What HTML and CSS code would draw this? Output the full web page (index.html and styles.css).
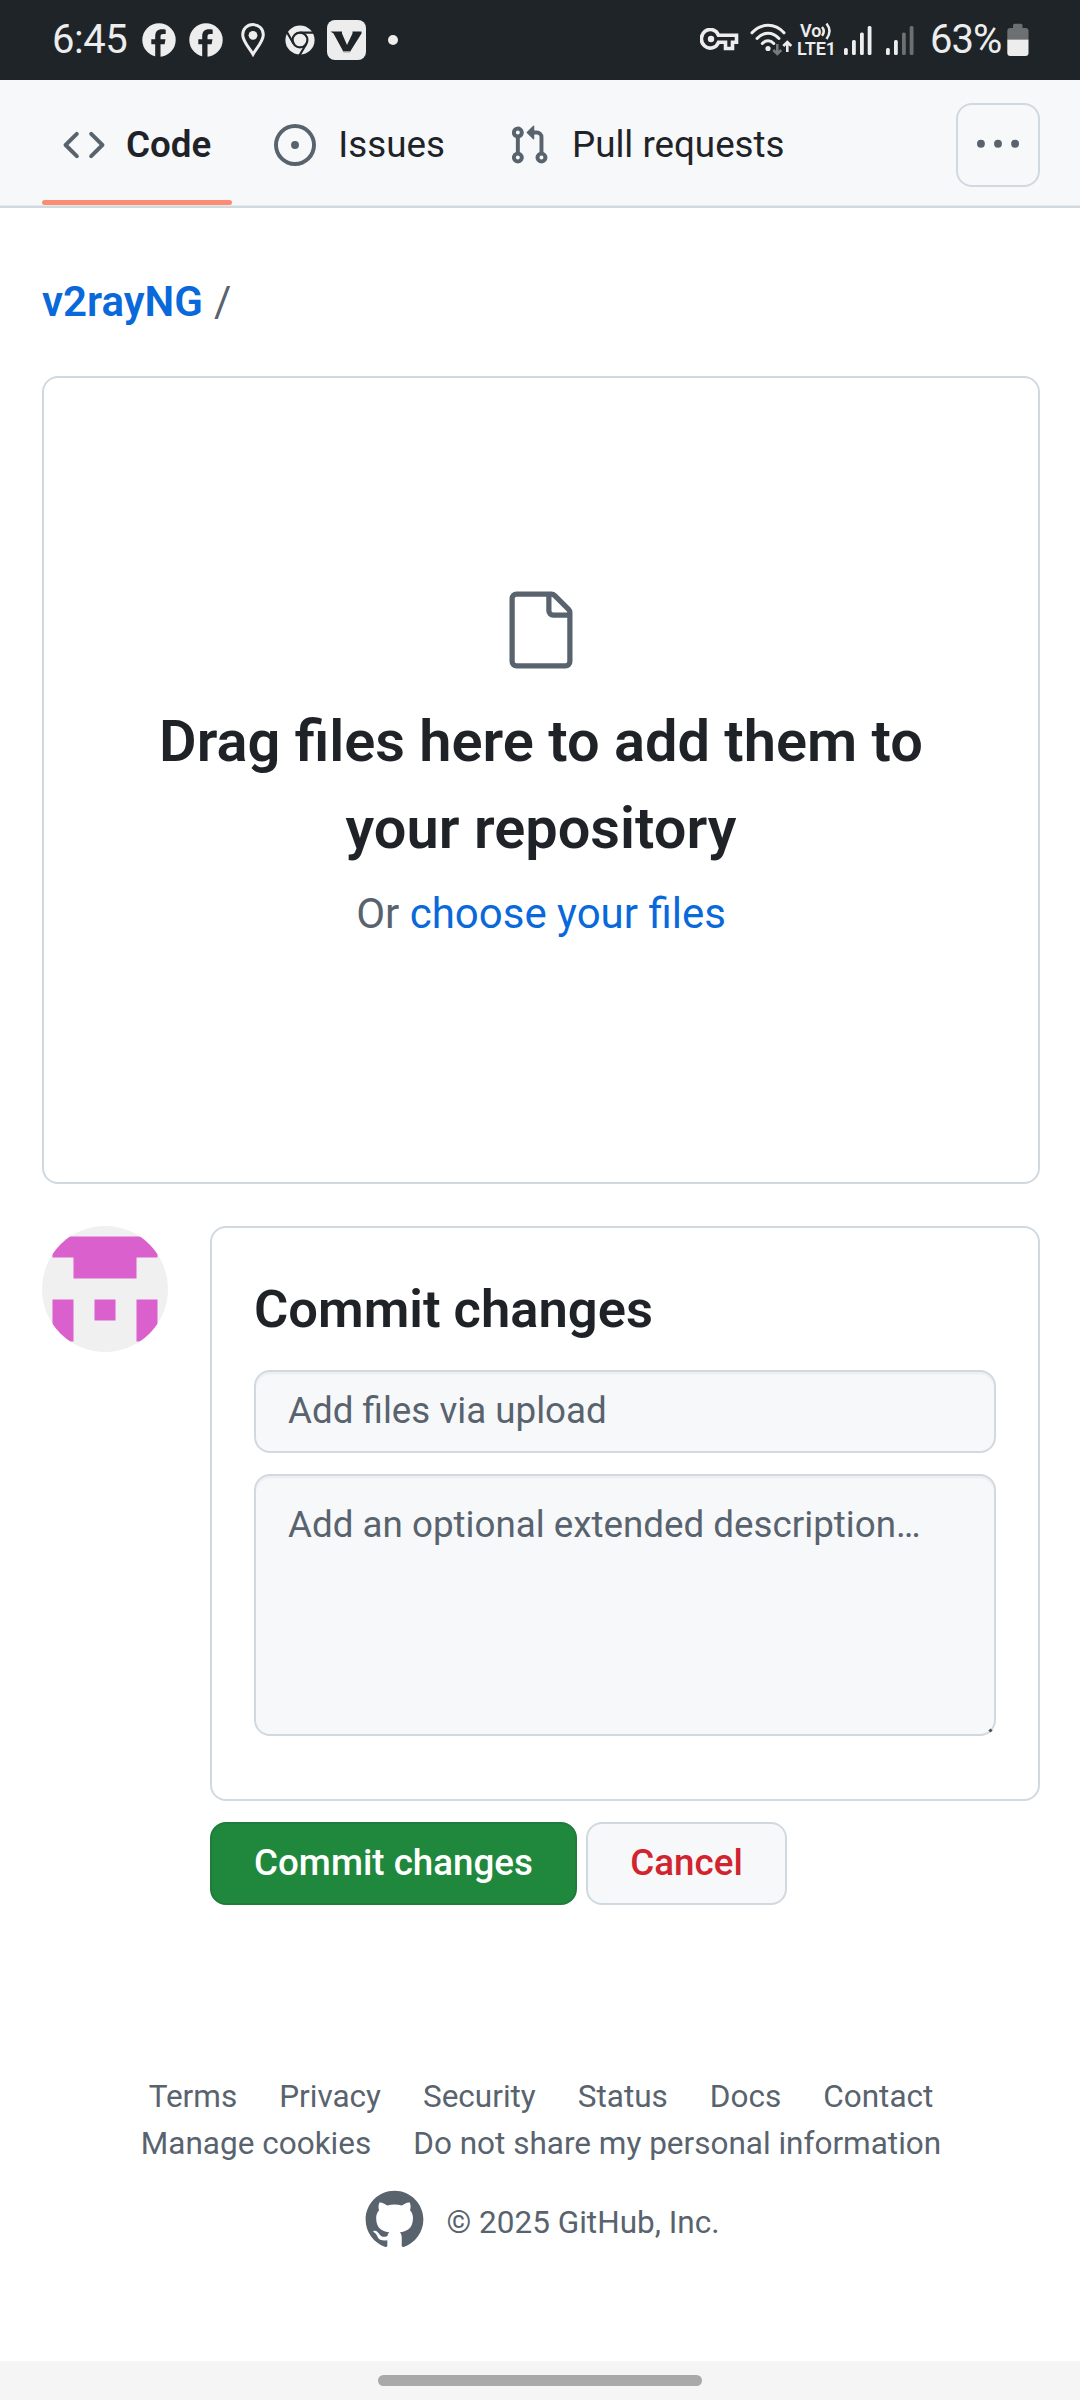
FILE: index.html
```html
<!DOCTYPE html>
<html lang="en">
<head>
<meta charset="utf-8">
<title>Upload files · v2rayNG</title>
<link rel="stylesheet" href="styles.css">
</head>
<body>
<div class="statusbar">
  <span class="clock">6:45</span>
  <svg class="i-fb" width="34" height="34" viewBox="0 0 34 34"><circle cx="17" cy="17" r="16.7" fill="#ededed"/><path d="M13.2 34V21.2H9.3v-5h3.9v-2.6c0-5 2.300-7.300 6.900-7.300 1.300 0 2.600.1 3.600.4v4.300h-2.500c-2 0-2.700.8-2.700 2.600v2.600h5l-.9 5h-4.100V34z" fill="#1f2428"/></svg>
  <svg class="i-fb2" width="34" height="34" viewBox="0 0 34 34"><circle cx="17" cy="17" r="16.7" fill="#ededed"/><path d="M13.2 34V21.2H9.3v-5h3.9v-2.6c0-5 2.300-7.300 6.900-7.300 1.300 0 2.600.1 3.600.4v4.300h-2.500c-2 0-2.700.8-2.700 2.600v2.600h5l-.9 5h-4.100V34z" fill="#1f2428"/></svg>
  <svg class="i-pin" width="24" height="34" viewBox="0 0 24 34"><path d="M12 1.600C6 1.600 1.700 6.100 1.700 11.800 1.700 18.500 9 26 12 31.300 15 26 22.300 18.500 22.300 11.800 22.300 6.100 18 1.600 12 1.600z" fill="none" stroke="#ededed" stroke-width="3"/><circle cx="12" cy="12.300" r="4.400" fill="#ededed"/></svg>
  <svg class="i-chrome" width="30" height="30" viewBox="0 0 30 30"><circle cx="15" cy="15" r="14.600" fill="#ededed"/><g fill="none" stroke="#1f2428" stroke-width="2.200"><circle cx="15" cy="15" r="7.400"/><path d="M15 7.600H29.500M8.600 18.700L1.600 6.500M21.400 18.700L14.400 30.500"/></g></svg>
  <svg class="i-v" width="39" height="40" viewBox="0 0 39 40"><rect width="39" height="40" rx="8" fill="#ededed"/><path d="M3.500 11.500H15v2L20 25l5.500-11.500v-2H34.500v2L23.500 31h-7.500L6.500 13.500z" fill="#1f2428"/><path d="M15.500 31h8.500l-1 1.500h-6.500z" fill="#9a9c9d"/></svg>
  <span class="more-dot"></span>
  <div class="status-right">
    <svg class="i-key" width="39" height="24" viewBox="0 0 39 24"><path d="M18.500 7.300H36.500v7h-4V20.500h-7v-6.200h-7A8.900 9.300 0 1 1 18.500 7.300z" fill="none" stroke="#ededed" stroke-width="3.600"/><circle cx="11" cy="11" r="3.200" fill="#ededed"/></svg>
    <svg class="i-wifi" width="43" height="34" viewBox="0 0 43 34"><g fill="none" stroke="#ededed" stroke-width="3" stroke-linecap="round"><path d="M2 9.800C11-.2 25-.2 34 9.800M7 15.500c6.500-7 15.500-7 22 0M12.300 20.500c3.500-3.700 8-3.700 11.500 0"/></g><circle cx="18" cy="25.500" r="2.600" fill="#ededed"/><path d="M27.300 21v10M23.300 27l4 4 4-4" fill="none" stroke="#77797b" stroke-width="2.600"/><path d="M37.300 29V19M33.300 23l4-4 4 4" fill="none" stroke="#ededed" stroke-width="2.600"/></svg>
    <div class="volte"><span class="vo">Vo<svg width="11" height="18" viewBox="0 0 11 18"><path d="M1 5q3.600 4.200 0 8.800M5.500 1.500q6 7.500 0 15.500" fill="none" stroke="#ededed" stroke-width="2.500"/></svg></span><span class="lte">LTE1</span></div>
    <svg class="i-sig" width="28" height="31" viewBox="0 0 28 31"><g fill="#ededed"><rect x="0" y="23" width="3.800" height="7" rx="1.500"/><rect x="8" y="15" width="3.800" height="15" rx="1.500"/><rect x="16" y="7.500" width="3.800" height="22.500" rx="1.500"/><rect x="23.700" y="1" width="3.800" height="29" rx="1.500"/></g></svg>
    <svg class="i-sig2" width="28" height="31" viewBox="0 0 28 31"><g fill="#ededed"><rect x="0" y="23" width="3.800" height="7" rx="1.500"/><rect x="8" y="15" width="3.800" height="15" rx="1.500"/></g><g fill="#6d7072"><rect x="16" y="7.500" width="3.800" height="22.500" rx="1.500"/><rect x="23.700" y="1" width="3.800" height="29" rx="1.500"/></g></svg>
    <span class="pct">63%</span>
    <svg class="i-bat" width="22" height="34" viewBox="0 0 22 34"><path d="M6 5V2.500Q6 .8 7.700.8h6.100q1.700 0 1.700 1.700V5h3q3 0 3 3v8.500H.3V8q0-3 3-3z" fill="#6d7072"/><path d="M.3 16.500h21.200V30q0 3-3 3H3.300q-3 0-3-3z" fill="#ededed"/></svg>
  </div>
</div>

<nav class="repo-nav">
  <a class="tab tab-active">
    <svg width="42" height="42" viewBox="0 0 16 16"><path d="m11.280 3.220 4.250 4.250a.75.75 0 0 1 0 1.060l-4.250 4.250a.749.749 0 0 1-1.275-.326.749.749 0 0 1 .215-.734L13.940 8l-3.720-3.720a.749.749 0 0 1 .326-1.275.749.749 0 0 1 .734.215Zm-6.560 0a.751.751 0 0 1 1.042.018.751.751 0 0 1 .018 1.042L2.060 8l3.720 3.720a.749.749 0 0 1-.326 1.275.749.749 0 0 1-.734-.215L.47 8.530a.75.75 0 0 1 0-1.060Z"/></svg>
    <span>Code</span>
  </a>
  <a class="tab">
    <svg width="42" height="42" viewBox="0 0 16 16"><path d="M8 9.500a1.500 1.500 0 1 0 0-3 1.500 1.500 0 0 0 0 3Z"/><path d="M8 0a8 8 0 1 1 0 16A8 8 0 0 1 8 0ZM1.500 8a6.500 6.500 0 1 0 13 0 6.500 6.500 0 0 0-13 0Z"/></svg>
    <span>Issues</span>
  </a>
  <a class="tab">
    <svg width="42" height="42" viewBox="0 0 16 16"><path d="M1.500 3.250a2.250 2.250 0 1 1 3 2.122v5.256a2.251 2.251 0 1 1-1.500 0V5.372A2.250 2.250 0 0 1 1.500 3.250Zm5.677-.177L9.573.677A.25.250 0 0 1 10 .854V2.500h1A2.500 2.500 0 0 1 13.500 5v5.628a2.251 2.251 0 1 1-1.500 0V5a1 1 0 0 0-1-1h-1v1.646a.25.250 0 0 1-.427.177L7.177 3.427a.25.250 0 0 1 0-.354ZM3.750 2.500a.75.75 0 1 0 0 1.500.75.75 0 0 0 0-1.500Zm0 9.500a.75.75 0 1 0 0 1.500.75.75 0 0 0 0-1.500Zm8.250.75a.75.75 0 1 0 1.500 0 .75.75 0 0 0-1.500 0Z"/></svg>
    <span>Pull requests</span>
  </a>
  <a class="tab-more">
    <svg width="42" height="42" viewBox="0 0 16 16"><path d="M8 9a1.500 1.500 0 1 0 0-3 1.500 1.500 0 0 0 0 3ZM1.500 9a1.500 1.500 0 1 0 0-3 1.500 1.500 0 0 0 0 3Zm13 0a1.500 1.500 0 1 0 0-3 1.500 1.500 0 0 0 0 3Z"/></svg>
  </a>
</nav>

<main class="content">
  <div class="breadcrumb"><a class="repo">v2rayNG</a><span class="sep">/</span></div>

  <section class="dropzone">
    <svg class="file-icon" width="84" height="84" viewBox="0 0 24 24"><path d="M3 3a2 2 0 0 1 2-2h9.982a2 2 0 0 1 1.414.586l4.018 4.018A2 2 0 0 1 21 7.018V21a2 2 0 0 1-2 2H5a2 2 0 0 1-2-2Zm2-.5a.5.500 0 0 0-.5.500v18a.5.500 0 0 0 .5.500h14a.5.500 0 0 0 .5-.5V8.500h-4a2 2 0 0 1-2-2v-4Zm10 0v4a.5.500 0 0 0 .5.500h4a.5.500 0 0 0-.146-.336l-4.018-4.018A.5.500 0 0 0 15 2.500Z"/></svg>
    <h2>Drag files here to add them to your repository</h2>
    <p>Or <a>choose your files</a></p>
  </section>

  <div class="commit">
    <svg class="avatar" width="126" height="126" viewBox="0 0 420 420"><rect width="420" height="420" fill="#f0f0f0"/><path d="M35 35h350v70H315v70H105v-70H35zM35 245h70v140H35zM175 245h70v70h-70zM315 245h70v140h-70z" fill="#da61cd"/></svg>
    <div class="commit-body">
      <div class="card">
        <h3>Commit changes</h3>
        <input class="field" type="text" placeholder="Add files via upload">
        <div class="area-wrap">
          <textarea class="field area" placeholder="Add an optional extended description…"></textarea>
          <span class="grip"></span>
        </div>
      </div>
      <div class="actions">
        <button class="btn btn-primary">Commit changes</button>
        <button class="btn btn-danger">Cancel</button>
      </div>
    </div>
  </div>
</main>

<footer class="footer">
  <div class="links"><a>Terms</a><a>Privacy</a><a>Security</a><a>Status</a><a>Docs</a><a>Contact</a></div>
  <div class="links"><a>Manage cookies</a><a>Do not share my personal information</a></div>
  <div class="legal">
    <svg width="63" height="63" viewBox="0 0 24 24"><path d="M12 1C5.9225 1 1 5.9225 1 12C1 16.8675 4.14875 20.9787 8.52125 22.4362C9.07125 22.5325 9.2775 22.2025 9.2775 21.9137C9.2775 21.6525 9.26375 20.7862 9.26375 19.865C6.5 20.3737 5.785 19.1912 5.565 18.5725C5.44125 18.2562 4.905 17.28 4.4375 17.0187C4.0525 16.8125 3.5025 16.3037 4.42375 16.29C5.29 16.2762 5.90875 17.0875 6.115 17.4175C7.105 19.0812 8.68625 18.6137 9.31875 18.325C9.415 17.61 9.70375 17.1287 10.02 16.8537C7.5725 16.5787 5.015 15.63 5.015 11.4225C5.015 10.2262 5.44125 9.23625 6.1425 8.46625C6.0325 8.19125 5.6475 7.06375 6.2525 5.55125C6.2525 5.55125 7.17375 5.2625 9.2775 6.67875C10.1575 6.43125 11.0925 6.3075 12.0275 6.3075C12.9625 6.3075 13.8975 6.43125 14.7775 6.67875C16.8813 5.24875 17.8025 5.55125 17.8025 5.55125C18.4075 7.06375 18.0225 8.19125 17.9125 8.46625C18.6138 9.23625 19.04 10.2125 19.04 11.4225C19.04 15.6437 16.4688 16.5787 14.0213 16.8537C14.42 17.1975 14.7638 17.8575 14.7638 18.8887C14.7638 20.36 14.75 21.5425 14.75 21.9137C14.75 22.2025 14.9563 22.5462 15.5063 22.4362C19.8513 20.9787 23 16.8537 23 12C23 5.9225 18.0775 1 12 1Z"/></svg>
    <span>© 2025 GitHub, Inc.</span>
  </div>
</footer>

<div class="gesture-bar"><span class="handle"></span></div>
</body>
</html>
```
FILE: styles.css
```css
* { box-sizing: border-box; }

body {
  margin: 0;
  width: 1080px;
  height: 2400px;
  display: flex;
  flex-direction: column;
  background: #fff;
  color: #1f2328;
  font-family: Roboto, "Liberation Sans", sans-serif;
  font-size: 36.75px;
  line-height: 1.5;
  overflow: hidden;
}

svg { display: block; flex: none; }
h2, h3, p { margin: 0; }

/* System status bar */
.statusbar {
  height: 80px;
  flex: none;
  display: flex;
  align-items: center;
  padding: 0 51px 0 52px;
  background: #1f2428;
  color: #ededed;
}
.clock, .pct { font-size: 40px; line-height: 78px; white-space: nowrap; }
.clock { width: 90px; letter-spacing: -0.5px; }
.i-fb2 { margin-left: 13px; }
.i-pin { margin-left: 18px; }
.i-chrome { margin-left: 20px; }
.i-v { margin-left: 12px; }
.more-dot { width: 10px; height: 10px; margin-left: 22px; border-radius: 50%; background: #ededed; }
.status-right { margin-left: auto; display: flex; align-items: center; }
.i-wifi { margin-left: 11px; }
.volte {
  width: 39px;
  margin-left: 4px;
  padding-bottom: 1px;
  display: flex;
  flex-direction: column;
  font-weight: 600;
}
.vo { display: flex; align-items: center; height: 18px; padding-left: 3px; font-size: 18px; line-height: 18px; }
.lte { font-size: 18px; line-height: 18px; }
.i-sig { margin-left: 8px; }
.i-sig2 { margin-left: 14px; }
.pct { width: 76px; margin-left: 16px; letter-spacing: -1px; }
.i-bat { margin-left: 1px; }

/* Repository tabs */
.repo-nav {
  height: 128px;
  flex: none;
  display: flex;
  align-items: center;
  padding: 2px 40px 0 42px;
  background: #f6f8fa;
  box-shadow: inset 0 -2.6px #d1d9e0;
}
.repo-nav svg { fill: #59636e; }
.tab {
  position: relative;
  height: 126px;
  display: flex;
  align-items: center;
  gap: 22px;
  padding: 0 21px;
  white-space: nowrap;
  margin-right: 21px;
}
.tab-active { gap: 21px; font-weight: 600; }
.tab-active::after {
  content: "";
  position: absolute;
  left: 0;
  right: 0;
  bottom: 3px;
  height: 5px;
  border-radius: 3px;
  background: #fd8c73;
}
.tab-more {
  width: 84px;
  height: 84px;
  margin-left: auto;
  display: flex;
  align-items: center;
  justify-content: center;
  border: 2px solid #d1d9e0;
  border-radius: 16px;
}

/* Page content */
.content { padding: 62px 40px 0 42px; flex: none; }
.breadcrumb { font-size: 42px; line-height: 63px; color: #59636e; }
.repo { font-weight: 600; color: #0969da; }
.sep { margin-left: 11px; }

.dropzone {
  height: 808px;
  margin-top: 43px;
  padding: 210px 80px 0;
  border: 2px solid #d1d9e0;
  border-radius: 16px;
  text-align: center;
}
.file-icon { margin: 0 auto 26px; fill: #59636e; }
.dropzone h2 { font-size: 57.75px; line-height: 86.6px; font-weight: 600; }
.dropzone p { margin-top: 10.500px; font-size: 42px; line-height: 63px; color: #59636e; }
.dropzone p a { color: #0969da; }

.commit { display: flex; gap: 42px; margin-top: 42px; }
.avatar { border-radius: 50%; }
.commit-body { flex: 1; }
.card {
  height: 575px;
  padding: 42px 42px 0;
  border: 2px solid #d1d9e0;
  border-radius: 16px;
}
.card h3 { font-size: 52.5px; line-height: 78.75px; font-weight: 600; margin-bottom: 21px; }
.field {
  display: block;
  width: 100%;
  height: 83px;
  margin: 0;
  padding: 0 32px 2px;
  border: 2px solid #d1d9e0;
  border-radius: 16px;
  background: #f6f8fa;
  box-shadow: inset 0 2.6px rgba(31, 35, 40, 0.04);
  font: inherit;
  outline: 0;
  resize: none;
}
.field::placeholder { color: #59636e; opacity: 1; }
.area-wrap { position: relative; margin-top: 21px; }
.area { height: 262px; padding: 21px 32px; overflow: hidden; }
.grip {
  position: absolute;
  right: 4px;
  bottom: 4px;
  width: 3px;
  height: 3px;
  background: #4a4f55;
  transform: rotate(45deg);
}

.actions { display: flex; gap: 9px; margin-top: 21px; }
.btn {
  height: 83px;
  padding: 0 42px 2px;
  border: 2px solid #d1d9e0;
  border-radius: 16px;
  background: #f6f8fa;
  font: inherit;
  font-weight: 500;
  white-space: nowrap;
}
.btn-primary { width: 367px; color: #fff; background: #1f883d; border-color: #1f7c3a; }
.btn-danger { width: 201px; color: #d1242f; }

/* Footer */
.footer { margin-top: 168px; font-size: 31.5px; line-height: 47.25px; color: #59636e; }
.links { display: flex; justify-content: center; gap: 42px; padding-left: 2px; white-space: nowrap; }
.legal { display: flex; justify-content: center; gap: 21px; margin-top: 20px; padding-left: 2px; }
.legal svg { fill: #59636e; }
.legal span { padding-top: 11px; }

/* System gesture area */
.gesture-bar {
  height: 39px;
  flex: none;
  margin-top: auto;
  display: flex;
  justify-content: center;
  padding-top: 14px;
  background: #f5f5f5;
}
.handle { width: 324px; height: 11px; border-radius: 5.5px; background: #a9a9a9; }
```
